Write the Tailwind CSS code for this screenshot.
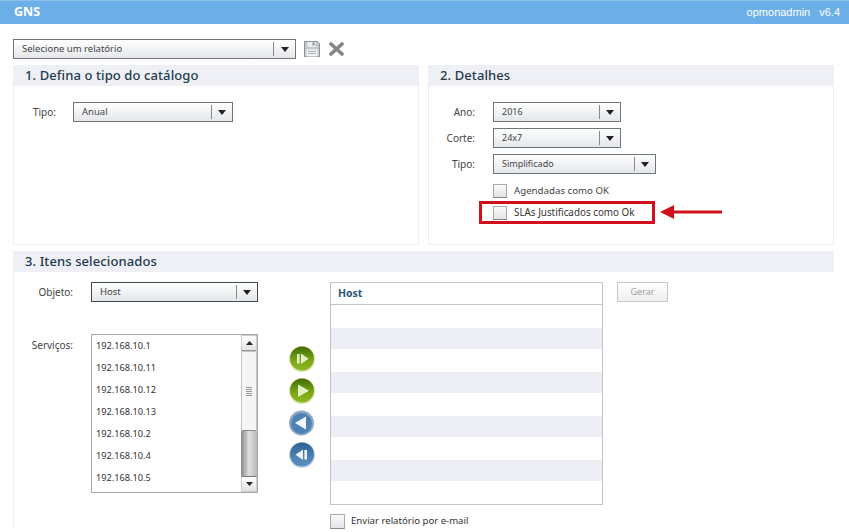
<!DOCTYPE html>
<html lang="en">
<head>
  <meta charset="UTF-8">
  <title>GNS</title>
  <script src="https://cdn.jsdelivr.net/npm/@tailwindcss/browser@4"></script>
</head>
<body class="bg-white h-[532px] overflow-hidden font-['Noto_Sans',sans-serif] text-[10px] text-[#444]">
  <!-- top bar -->
  <header class="h-[24px] bg-[#6cafe8] border-t border-[#8cc2ee] flex items-center justify-between pl-[14px] pr-[9px] text-white">
    <span class="text-[12.5px] font-bold">GNS</span>
    <span class="font-['Liberation_Sans',sans-serif] text-[11px] text-white">opmonadmin<span class="ml-[9px]">v6.4</span></span>
  </header>

  <main class="w-[821px] ml-[13px] pt-[15px]">
    <!-- report picker -->
    <div class="flex items-center h-[20px]">
      <div class="w-[283px] h-[20px] flex items-center border border-[#6e767c] bg-linear-to-b from-white to-[#e4e7ea] pl-[8px] text-[9.5px]">
        <span class="flex-1">Selecione um relatório</span>
        <span class="w-px h-[14px] bg-[#888]"></span>
        <span class="w-[21px] flex justify-center"><svg width="8" height="5" viewBox="0 0 8 5"><path d="M0 0h8L4 5z" fill="#222"/></svg></span>
      </div>
      <svg class="ml-[8px]" width="16" height="16" viewBox="0 0 16 16">
        <path d="M0.5 0.5H13.5L15.5 2.5V15.5H0.5Z" fill="#c3c9cc" stroke="#8d9498"/>
        <rect x="3.5" y="1" width="8" height="5" fill="#eceeef"/>
        <rect x="8.5" y="1.5" width="2" height="3" fill="#8d9498"/>
        <rect x="2.5" y="8.5" width="11" height="7" fill="#f2f3f4"/>
        <path d="M4 10.5h8M4 12.5h8" stroke="#a9b0b4"/>
      </svg>
      <svg class="ml-[9px]" width="15" height="14" viewBox="0 0 15 14"><path d="M2 2L13 12M13 2L2 12" stroke="#7f8588" stroke-width="3.6" stroke-linecap="round"/></svg>
    </div>

    <div class="grid grid-cols-[406px_406px] gap-x-[9px] mt-[6px]">
      <!-- section 1 -->
      <section class="h-[180px] border border-[#eceef2] border-t-0">
        <h2 class="h-[21px] -mx-px bg-[#eef0f5] pl-[12px] flex items-center text-[13px] font-medium tracking-[0.1px] text-[#1f3a4d]">1. Defina o tipo do catálogo</h2>
        <div class="flex items-center mt-[16px]">
          <span class="w-[42px] text-right">Tipo:</span>
          <div class="ml-[17px] w-[160px] h-[20px] flex items-center border border-[#6e767c] bg-linear-to-b from-white to-[#e4e7ea] pl-[8px] text-[9.5px]">
            <span class="flex-1">Anual</span>
            <span class="w-px h-[14px] bg-[#888]"></span>
            <span class="w-[20px] flex justify-center"><svg width="8" height="5" viewBox="0 0 8 5"><path d="M0 0h8L4 5z" fill="#222"/></svg></span>
          </div>
        </div>
      </section>

      <!-- section 2 -->
      <section class="h-[180px] border border-[#eceef2] border-t-0">
        <h2 class="h-[21px] -mx-px bg-[#eef0f5] pl-[12px] flex items-center text-[13px] font-medium tracking-[0.1px] text-[#1f3a4d]">2. Detalhes</h2>
        <div class="flex items-center mt-[16px]">
          <span class="w-[46px] text-right">Ano:</span>
          <div class="ml-[18px] w-[128px] h-[20px] flex items-center border border-[#6e767c] bg-linear-to-b from-white to-[#e4e7ea] pl-[8px] text-[9px]">
            <span class="flex-1">2016</span>
            <span class="w-px h-[14px] bg-[#888]"></span>
            <span class="w-[20px] flex justify-center"><svg width="8" height="5" viewBox="0 0 8 5"><path d="M0 0h8L4 5z" fill="#222"/></svg></span>
          </div>
        </div>
        <div class="flex items-center mt-[6px]">
          <span class="w-[46px] text-right">Corte:</span>
          <div class="ml-[18px] w-[128px] h-[20px] flex items-center border border-[#6e767c] bg-linear-to-b from-white to-[#e4e7ea] pl-[8px] text-[9px]">
            <span class="flex-1">24x7</span>
            <span class="w-px h-[14px] bg-[#888]"></span>
            <span class="w-[20px] flex justify-center"><svg width="8" height="5" viewBox="0 0 8 5"><path d="M0 0h8L4 5z" fill="#222"/></svg></span>
          </div>
        </div>
        <div class="flex items-center mt-[6px]">
          <span class="w-[46px] text-right">Tipo:</span>
          <div class="ml-[18px] w-[163px] h-[20px] flex items-center border border-[#6e767c] bg-linear-to-b from-white to-[#e4e7ea] pl-[8px] text-[9px]">
            <span class="flex-1">Simplificado</span>
            <span class="w-px h-[14px] bg-[#888]"></span>
            <span class="w-[20px] flex justify-center"><svg width="8" height="5" viewBox="0 0 8 5"><path d="M0 0h8L4 5z" fill="#222"/></svg></span>
          </div>
        </div>
        <div class="flex items-center mt-[10px] ml-[64px] h-[14px] text-[9.7px]">
          <span class="w-[14px] h-[14px] border border-[#aaa] border-b-[#888] bg-linear-to-b from-[#fafafa] to-[#e4e4e4]"></span>
          <span class="ml-[7px]">Agendadas como OK</span>
        </div>
        <div class="flex items-center mt-[3px] ml-[50px]">
          <div class="w-[176px] h-[23px] flex items-center border-[3px] border-[#d0101a] pl-[11px] text-[#333] text-[9.85px]">
            <span class="w-[14px] h-[14px] border border-[#aaa] border-b-[#888] bg-linear-to-b from-[#fafafa] to-[#e4e4e4]"></span>
            <span class="ml-[7px]">SLAs Justificados como Ok</span>
          </div>
          <svg class="ml-[5px] mb-[2px]" width="62" height="14" viewBox="0 0 62 14"><path d="M0 7L14 0V5.5H62V8.5H14V14Z" fill="#d0101a"/></svg>
        </div>
      </section>
    </div>

    <!-- section 3 -->
    <section class="mt-[6px] border-l border-[#eceef2]">
      <h2 class="h-[21px] bg-[#eef0f5] pl-[11px] flex items-center text-[13px] font-medium tracking-[0.1px] text-[#1f3a4d]">3. Itens selecionados</h2>
      <div class="flex pt-[10px]">
        <div class="w-[244px]">
          <div class="flex items-center">
            <span class="w-[59px] text-right">Objeto:</span>
            <div class="ml-[18px] w-[167px] h-[20px] flex items-center border border-[#3f4a52] bg-linear-to-b from-white to-[#e4e7ea] pl-[8px] text-[9.5px]">
              <span class="flex-1">Host</span>
              <span class="w-px h-[14px] bg-[#888]"></span>
              <span class="w-[20px] flex justify-center"><svg width="8" height="5" viewBox="0 0 8 5"><path d="M0 0h8L4 5z" fill="#222"/></svg></span>
            </div>
          </div>
          <div class="flex mt-[32px]">
            <span class="w-[59px] text-right pt-[4px]">Serviços:</span>
            <div class="ml-[18px] w-[167px] h-[159px] flex border border-[#a8a8a8] overflow-hidden">
              <ul class="flex-1 pl-[4px] pt-[3px] text-[#333] text-[9.2px]">
                <li class="h-[22px] leading-[16px]">192.168.10.1</li>
                <li class="h-[22px] leading-[16px]">192.168.10.11</li>
                <li class="h-[22px] leading-[16px]">192.168.10.12</li>
                <li class="h-[22px] leading-[16px]">192.168.10.13</li>
                <li class="h-[22px] leading-[16px]">192.168.10.2</li>
                <li class="h-[22px] leading-[16px]">192.168.10.4</li>
                <li class="h-[22px] leading-[16px]">192.168.10.5</li>
              </ul>
              <!-- scrollbar -->
              <div class="w-[16px] flex flex-col">
                <span class="h-[16px] flex items-center justify-center bg-linear-to-b from-white to-[#e2e2e2] border border-[#ccc] border-b-[#999]"><svg width="7" height="4" viewBox="0 0 7 4"><path d="M0 4h7L3.5 0z" fill="#222"/></svg></span>
                <span class="h-[80px] flex flex-col gap-px items-center justify-center bg-[#f5f5f5] border border-[#c4c4c4] border-b-[#888] rounded-[2px]">
                  <i class="w-[6px] h-px bg-[#999]"></i><i class="w-[6px] h-px bg-[#999]"></i><i class="w-[6px] h-px bg-[#999]"></i><i class="w-[6px] h-px bg-[#999]"></i><i class="w-[6px] h-px bg-[#999]"></i>
                </span>
                <span class="flex-1 bg-linear-to-r from-[#8a8a8a] via-[#e0e0e0] to-[#b8b8b8]"></span>
                <span class="h-[16px] flex items-center justify-center bg-linear-to-b from-white to-[#e2e2e2] border border-[#ccc] border-t-[#777]"><svg width="7" height="4" viewBox="0 0 7 4"><path d="M0 0h7L3.5 4z" fill="#222"/></svg></span>
              </div>
            </div>
          </div>
        </div>

        <!-- move buttons -->
        <div class="ml-[31px] w-[26px] pt-[64px] flex flex-col gap-[6px]">
          <svg width="26" height="26" viewBox="0 0 26 26">
            <defs>
              <linearGradient id="g" x1="0" y1="0" x2="0" y2="1"><stop offset="0" stop-color="#3f6a05"/><stop offset="0.55" stop-color="#78a414"/><stop offset="1" stop-color="#8fb822"/></linearGradient>
              <linearGradient id="b" x1="0" y1="0" x2="0" y2="1"><stop offset="0" stop-color="#2c5f92"/><stop offset="0.6" stop-color="#4f82b4"/><stop offset="1" stop-color="#5c8fbf"/></linearGradient>
            </defs>
            <circle cx="13" cy="13" r="13" fill="#dce8ae"/>
            <circle cx="13" cy="12.5" r="12" fill="url(#g)"/>
            <path d="M8 8h2.6v9.5H8zM12 7.5L19.5 12.8L12 18Z" fill="#e6f0c8"/>
          </svg>
          <svg width="26" height="26" viewBox="0 0 26 26">
            <circle cx="13" cy="13" r="13" fill="#dce8ae"/>
            <circle cx="13" cy="12.5" r="12" fill="url(#g)"/>
            <path d="M9 6.5L20 12.8L9 19Z" fill="#e6f0c8"/>
          </svg>
          <svg width="26" height="26" viewBox="0 0 26 26">
            <circle cx="12.5" cy="13" r="12.5" fill="#8fa9c4"/>
            <circle cx="12.5" cy="13.5" r="10.5" fill="#4f82b4"/>
            <path d="M17 6.5L6 13L17 19.5Z" fill="#f2f6fa"/>
          </svg>
          <svg width="26" height="26" viewBox="0 0 26 26">
            <circle cx="13" cy="13" r="13" fill="#c3d5e6"/>
            <circle cx="13" cy="12.5" r="12" fill="url(#b)"/>
            <path d="M18 8h-2.6v9.5H18zM14 7.5L6.5 12.8L14 18Z" fill="#eef4fa"/>
          </svg>
        </div>

        <!-- selected items -->
        <div class="ml-[15px] w-[273px]">
          <div class="h-[223px] border border-[#c4c4c4] overflow-hidden">
            <div class="h-[22px] border-b border-[#c4c4c4] pl-[7px] flex items-center font-bold text-[10.5px] text-[#2b5578]">Host</div>
            <div class="h-[23px]"></div>
            <div class="h-[21px] bg-[#edeff4]"></div>
            <div class="h-[23px]"></div>
            <div class="h-[21px] bg-[#edeff4]"></div>
            <div class="h-[23px]"></div>
            <div class="h-[21px] bg-[#edeff4]"></div>
            <div class="h-[23px]"></div>
            <div class="h-[21px] bg-[#edeff4]"></div>
          </div>
          <div class="flex items-center mt-[9px]">
            <span class="w-[15px] h-[15px] border border-[#aaa] border-b-[#888] bg-linear-to-b from-[#fafafa] to-[#e4e4e4]"></span>
            <span class="ml-[6px] text-[#333] text-[9.6px]">Enviar relatório por e-mail</span>
          </div>
        </div>

        <button class="ml-[14px] w-[51px] h-[20px] border border-[#c8c8c8] bg-linear-to-b from-white to-[#eeeeee] text-[#9aa0a4] text-[9px]">Gerar</button>
      </div>
    </section>
  </main>
</body>
</html>
